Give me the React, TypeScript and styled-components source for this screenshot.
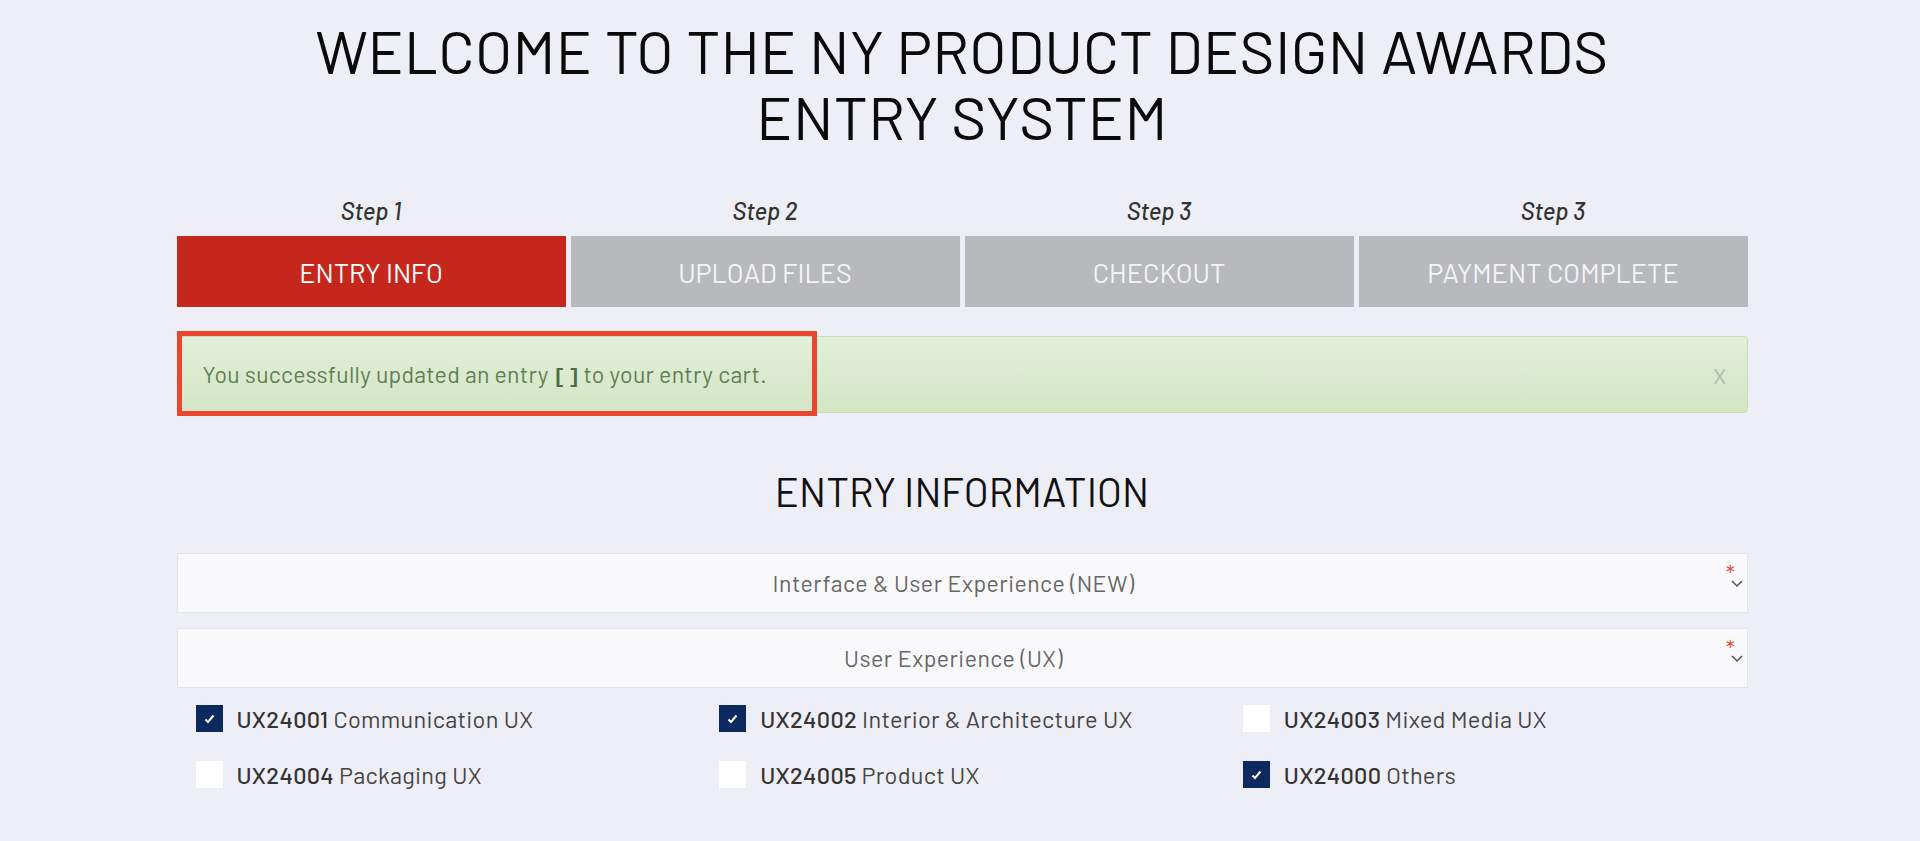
import styled, { createGlobalStyle } from 'styled-components';

const FONT = `Barlow, Roboto, 'Liberation Sans', sans-serif`;

const GlobalStyle = createGlobalStyle`
  html, body {
    margin: 0;
    padding: 0;
    background: #eeeef6;
    font-family: ${FONT};
  }
`;

const Page = styled.div`
  width: 1571px;
  margin: 0 auto;
  padding: 17px 0 40px 4px;
`;

const Title = styled.h1`
  margin: 0;
  text-align: center;
  font-size: 60px;
  line-height: 66px;
  font-weight: 400;
  color: #0a0a0a;
  letter-spacing: 0.3px;
`;

const Steps = styled.div`
  display: grid;
  grid-template-columns: repeat(4, 1fr);
  column-gap: 5px;
  margin-top: 47px;
`;

const Step = styled.div`
  display: flex;
  flex-direction: column;
  align-items: center;
`;

const StepLabel = styled.div`
  font-size: 24px;
  font-style: italic;
  font-weight: 500;
  color: #333;
  line-height: 30px;
  margin-bottom: 10px;
`;

const Tab = styled.div<{ $active?: boolean }>`
  display: flex;
  align-items: center;
  justify-content: center;
  width: 100%;
  height: 71px;
  font-size: 27px;
  color: ${(p) => (p.$active ? '#fff' : '#f4f4f6')};
  background: ${(p) => (p.$active ? '#c5271c' : '#b8b9bd')};
`;

const AlertWrap = styled.div`
  position: relative;
  margin-top: 29px;
`;

const Alert = styled.div`
  display: flex;
  align-items: center;
  justify-content: space-between;
  height: 77px;
  box-sizing: border-box;
  padding: 0 20px 0 25px;
  border: 1px solid #c6deb5;
  border-radius: 4px;
  background: linear-gradient(#e3efd9, #d3e5c4);
  color: #5e7f52;
  font-size: 23px;
  letter-spacing: 0.3px;
`;

const Code = styled.span`
  font-family: 'Liberation Mono', monospace;
  font-weight: 700;
  font-size: 21px;
  color: #4d6c43;
  letter-spacing: -5px;
  margin: 0 8px 0 4px;
`;

const Close = styled.span`
  color: #a9b9a0;
  font-size: 22px;
`;

const Highlight = styled.div`
  position: absolute;
  left: 0;
  top: -5px;
  width: 640px;
  height: 85px;
  box-sizing: border-box;
  border: 5px solid #e8472e;
  pointer-events: none;
`;

const SectionTitle = styled.h2`
  margin: 53px 0 37px;
  text-align: center;
  font-size: 40px;
  line-height: 50px;
  font-weight: 400;
  color: #111;
  letter-spacing: 0.1px;
`;

const Select = styled.div`
  position: relative;
  display: flex;
  align-items: center;
  justify-content: center;
  height: 60px;
  box-sizing: border-box;
  padding-right: 17px;
  margin-bottom: 15px;
  background: #f9f9fb;
  border: 1px solid #e3e3ea;
  color: #666;
  font-size: 23px;
  letter-spacing: 0.5px;
`;

const Required = styled.span`
  position: absolute;
  right: 11px;
  top: 8px;
  color: #e5473a;
  font-size: 23px;
  line-height: 22px;
`;

const Chevron = styled.svg`
  position: absolute;
  right: 4px;
  top: 26px;
`;

const Options = styled.div`
  display: grid;
  grid-template-columns: repeat(3, 1fr);
  row-gap: 27px;
  padding-top: 1px;
`;

const Option = styled.label`
  display: flex;
  align-items: center;
  gap: 14px;
  padding-left: 19px;
  font-size: 23.5px;
  letter-spacing: 0.3px;
  color: #444;
`;

const Box = styled.span<{ $checked?: boolean }>`
  display: inline-flex;
  align-items: center;
  justify-content: center;
  width: 27px;
  height: 27px;
  background: ${(p) => (p.$checked ? '#0d2a60' : '#fff')};
`;

const CodeNo = styled.b`
  font-weight: 500;
  color: #333;
`;

const steps = [
  { label: 'Step 1', name: 'ENTRY INFO', active: true },
  { label: 'Step 2', name: 'UPLOAD FILES' },
  { label: 'Step 3', name: 'CHECKOUT' },
  { label: 'Step 3', name: 'PAYMENT COMPLETE' },
];

const options = [
  { code: 'UX24001', name: 'Communication UX', checked: true },
  { code: 'UX24002', name: 'Interior & Architecture UX', checked: true },
  { code: 'UX24003', name: 'Mixed Media UX' },
  { code: 'UX24004', name: 'Packaging UX' },
  { code: 'UX24005', name: 'Product UX' },
  { code: 'UX24000', name: 'Others', checked: true },
];

const SelectBox = ({ text }: { text: string }) => (
  <Select>
    {text}
    <Required>*</Required>
    <Chevron width="12" height="8" viewBox="0 0 12 8">
      <polyline points="1,1 6,6 11,1" fill="none" stroke="#555" strokeWidth="1.5" />
    </Chevron>
  </Select>
);

export default function App() {
  return (
    <>
      <GlobalStyle />
      <Page>
        <Title>
          WELCOME TO THE NY PRODUCT DESIGN AWARDS
          <br />
          ENTRY SYSTEM
        </Title>

        <Steps>
          {steps.map((s) => (
            <Step key={s.name}>
              <StepLabel>{s.label}</StepLabel>
              <Tab $active={s.active}>{s.name}</Tab>
            </Step>
          ))}
        </Steps>

        <AlertWrap>
          <Alert>
            <span>
              You successfully updated an entry<Code>[ ]</Code>to your entry cart.
            </span>
            <Close>X</Close>
          </Alert>
          <Highlight />
        </AlertWrap>

        <SectionTitle>ENTRY INFORMATION</SectionTitle>

        <SelectBox text="Interface & User Experience (NEW)" />
        <SelectBox text="User Experience (UX)" />

        <Options>
          {options.map((o) => (
            <Option key={o.code}>
              <Box $checked={o.checked}>
                {o.checked && (
                  <svg width="11" height="10" viewBox="0 0 11 10">
                    <polyline points="1.5,5.5 4,8 9.5,1.5" fill="none" stroke="#fff" strokeWidth="2" />
                  </svg>
                )}
              </Box>
              <span>
                <CodeNo>{o.code}</CodeNo> {o.name}
              </span>
            </Option>
          ))}
        </Options>
      </Page>
    </>
  );
}
